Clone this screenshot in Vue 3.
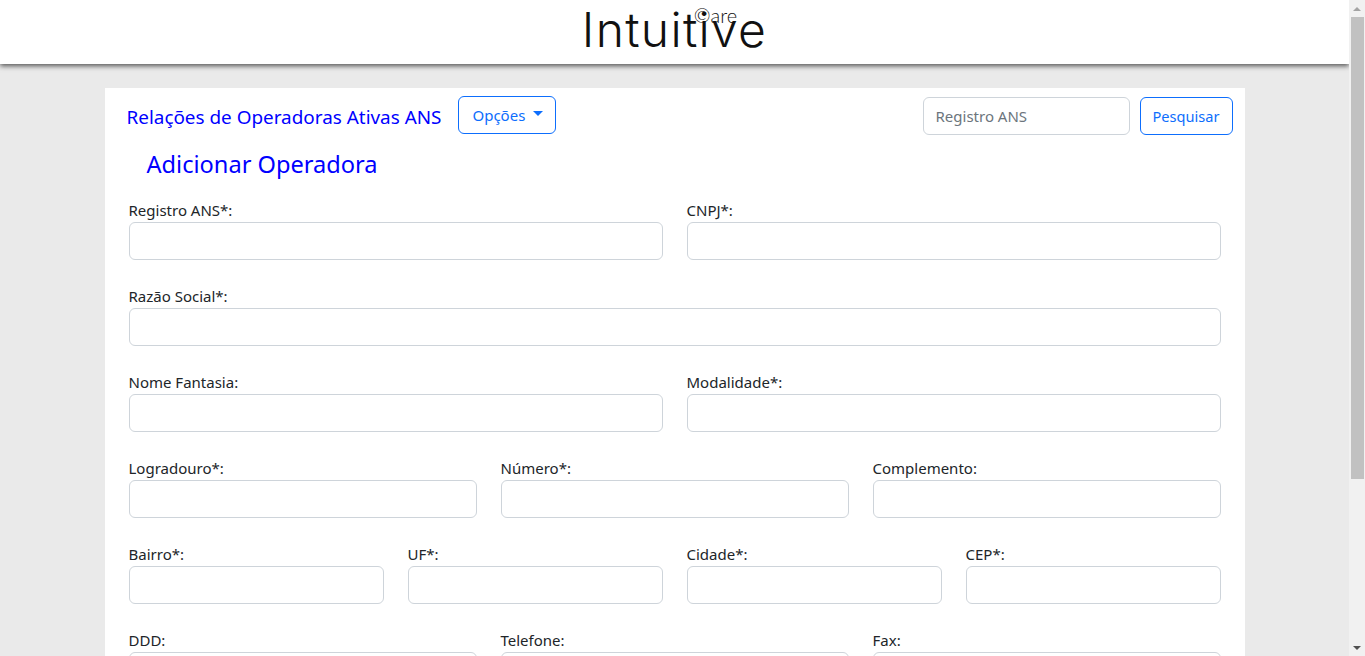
<template>
  <div class="page">
    <div class="content">
      <header class="top-bar">
        <div class="logo">
          <span class="logo-main">Intuitive</span>
          <span class="logo-care">©are</span>
        </div>
      </header>

      <main class="container">
        <div class="nav-row">
          <span class="brand">Relações de Operadoras Ativas ANS</span>
          <button class="btn dropdown-btn" type="button">Opções<span class="caret"></span></button>
          <form class="search" @submit.prevent>
            <input class="form-control search-input" type="text" placeholder="Registro ANS" />
            <button class="btn search-btn" type="submit">Pesquisar</button>
          </form>
        </div>

        <h1 class="title">Adicionar Operadora</h1>

        <form class="op-form" @submit.prevent>
          <div v-for="(row, i) in rows" :key="i" class="form-row">
            <div v-for="field in row" :key="field" class="field">
              <label class="field-label">{{ field }}</label>
              <input class="form-control" type="text" />
            </div>
          </div>
        </form>
      </main>
    </div>

    <div class="scrollbar">
      <span class="arrow arrow-up"></span>
      <div class="thumb"></div>
      <span class="arrow arrow-down"></span>
    </div>
  </div>
</template>

<script setup>
const rows = [
  ['Registro ANS*:', 'CNPJ*:'],
  ['Razão Social*:'],
  ['Nome Fantasia:', 'Modalidade*:'],
  ['Logradouro*:', 'Número*:', 'Complemento:'],
  ['Bairro*:', 'UF*:', 'Cidade*:', 'CEP*:'],
  ['DDD:', 'Telefone:', 'Fax:'],
];
</script>

<style scoped>
.page {
  display: flex;
  height: 100vh;
  overflow: hidden;
  background-color: #eaeaea;
  font-family: 'Noto Sans', 'Open Sans', sans-serif;
  font-size: 15px;
  color: #212529;
}

.content {
  flex: 1 1 0;
  min-width: 0;
}

.scrollbar {
  flex: 0 0 16px;
  display: flex;
  flex-direction: column;
  align-items: center;
  background-color: #f1f1f1;
}

.arrow {
  flex: 0 0 auto;
  width: 0;
  height: 0;
  border-left: 4px solid transparent;
  border-right: 4px solid transparent;
}

.arrow-up {
  margin: 7px 0 6px;
  border-bottom: 4px solid #a3a3a3;
}

.arrow-down {
  margin: auto 0 6px;
  border-top: 4px solid #505050;
}

.thumb {
  flex: 0 0 462px;
  width: 13px;
  align-self: flex-end;
  margin-right: 1px;
  background-color: #c1c1c1;
}

.top-bar {
  height: 64px;
  background-color: #fff;
  display: flex;
  justify-content: center;
  box-shadow: 0 2px 5px rgba(0, 0, 0, 0.65);
}

.logo {
  position: relative;
  height: 64px;
  color: #111;
  line-height: 1;
}

.logo-main {
  display: block;
  font-family: 'Inter', sans-serif;
  font-weight: 300;
  font-size: 48px;
  letter-spacing: 1.3px;
  padding-top: 6px;
}

.logo-care {
  position: absolute;
  top: 5px;
  left: 112px;
  font-family: 'Lato', sans-serif;
  font-weight: 300;
  font-size: 20px;
}

.container {
  width: 1140px;
  margin: 24px auto 0;
  background-color: #fff;
  padding: 8px 12px 40px;
  box-sizing: border-box;
}

.nav-row {
  display: flex;
  align-items: flex-start;
  padding-left: 10px;
  height: 38px;
}

.brand {
  font-size: 18.9px;
  line-height: 42px;
  color: #0000ff;
  margin-right: 17px;
}

.btn {
  height: 38px;
  padding: 0 13px;
  border: 1px solid #0d6efd;
  border-radius: 6px;
  background: #fff;
  color: #0d6efd;
  font-family: inherit;
  font-size: 15px;
}

.dropdown-btn {
  display: flex;
  align-items: center;
  width: 98px;
  box-sizing: border-box;
}

.search-btn {
  width: 93px;
  padding: 0;
  font-size: 14.6px;
  box-sizing: border-box;
}

.caret {
  margin-left: 8px;
  margin-top: -3px;
  border-top: 5px solid #0d6efd;
  border-left: 5px solid transparent;
  border-right: 5px solid transparent;
}

.search {
  margin-left: auto;
  margin-top: 1px;
  display: flex;
  gap: 10px;
}

.search-input {
  width: 207px;
}

.form-control {
  display: block;
  height: 38px;
  box-sizing: border-box;
  padding: 6px 12px;
  border: 1px solid #ced4da;
  border-radius: 6px;
  background: #fff;
  font-family: inherit;
  font-size: 15px;
  color: #212529;
}

.form-control::placeholder {
  color: #6c757d;
}

.title {
  margin: 11px 0 0 30px;
  font-size: 23.6px;
  font-weight: 400;
  line-height: 38px;
  color: #0000ff;
}

.op-form {
  padding: 0 12px;
  margin-top: 15px;
}

.form-row {
  display: flex;
  gap: 24px;
  margin-bottom: 24px;
}

.field {
  flex: 1 1 0;
  min-width: 0;
}

.field .form-control {
  width: 100%;
}

.field-label {
  display: block;
  line-height: 24px;
}
</style>

<style>
body {
  margin: 0;
}
</style>
